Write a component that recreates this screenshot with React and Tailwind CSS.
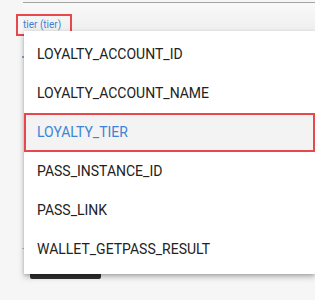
import React from "react";

const options = [
  "LOYALTY_ACCOUNT_ID",
  "LOYALTY_ACCOUNT_NAME",
  "LOYALTY_TIER",
  "PASS_INSTANCE_ID",
  "PASS_LINK",
  "WALLET_GETPASS_RESULT",
];

export default function App() {
  const selected = "LOYALTY_TIER";

  return (
    <div
      className="relative h-[300px] w-[315px] overflow-hidden bg-[#f6f6f6]"
      style={{ fontFamily: "Roboto, 'Liberation Sans', sans-serif" }}
    >
      {/* page underneath the menu */}
      <div className="flex flex-col pl-[16px] pt-[2px]">
        <div className="ml-[7px] h-[29px] border-t border-[#a3a3a3] bg-gradient-to-b from-[#f9f9f9] to-[#efefef]" />
        <div className="-mt-[17px] w-[56px] border-2 border-[#e8484c] pl-[5px] pt-[2px] pb-[2px] text-[10px] leading-[14px] text-[#3f82d3]">
          tier (tier)
        </div>
        <div className="ml-[6px] mt-[20px] h-[2px] w-[2px] bg-[#7fa6d8]" />
        <div className="ml-[6px] mt-[190px] h-px w-[2px] bg-[#bdbdbd]" />
        <div className="ml-[14px] h-[30px] w-[71px] rounded-[2px] bg-[#2f2f2f]" />
      </div>

      {/* dropdown menu */}
      <div className="absolute left-[24px] top-[31px] w-[291px] bg-white pt-[4px] pb-[5px] shadow-[0_3px_6px_rgba(0,0,0,0.25),0_1px_3px_rgba(0,0,0,0.15)]">
        {options.map((opt) => {
          const active = opt === selected;
          return (
            <div
              key={opt}
              className={
                active
                  ? "flex h-[39px] items-center border-2 border-[#e8484c] bg-[#f3f3f3] pl-[11px] text-[14px] text-[#3d84d6]"
                  : "flex h-[39px] items-center pl-[13px] text-[14px] text-[#222222]"
              }
            >
              {opt}
            </div>
          );
        })}
      </div>
    </div>
  );
}
